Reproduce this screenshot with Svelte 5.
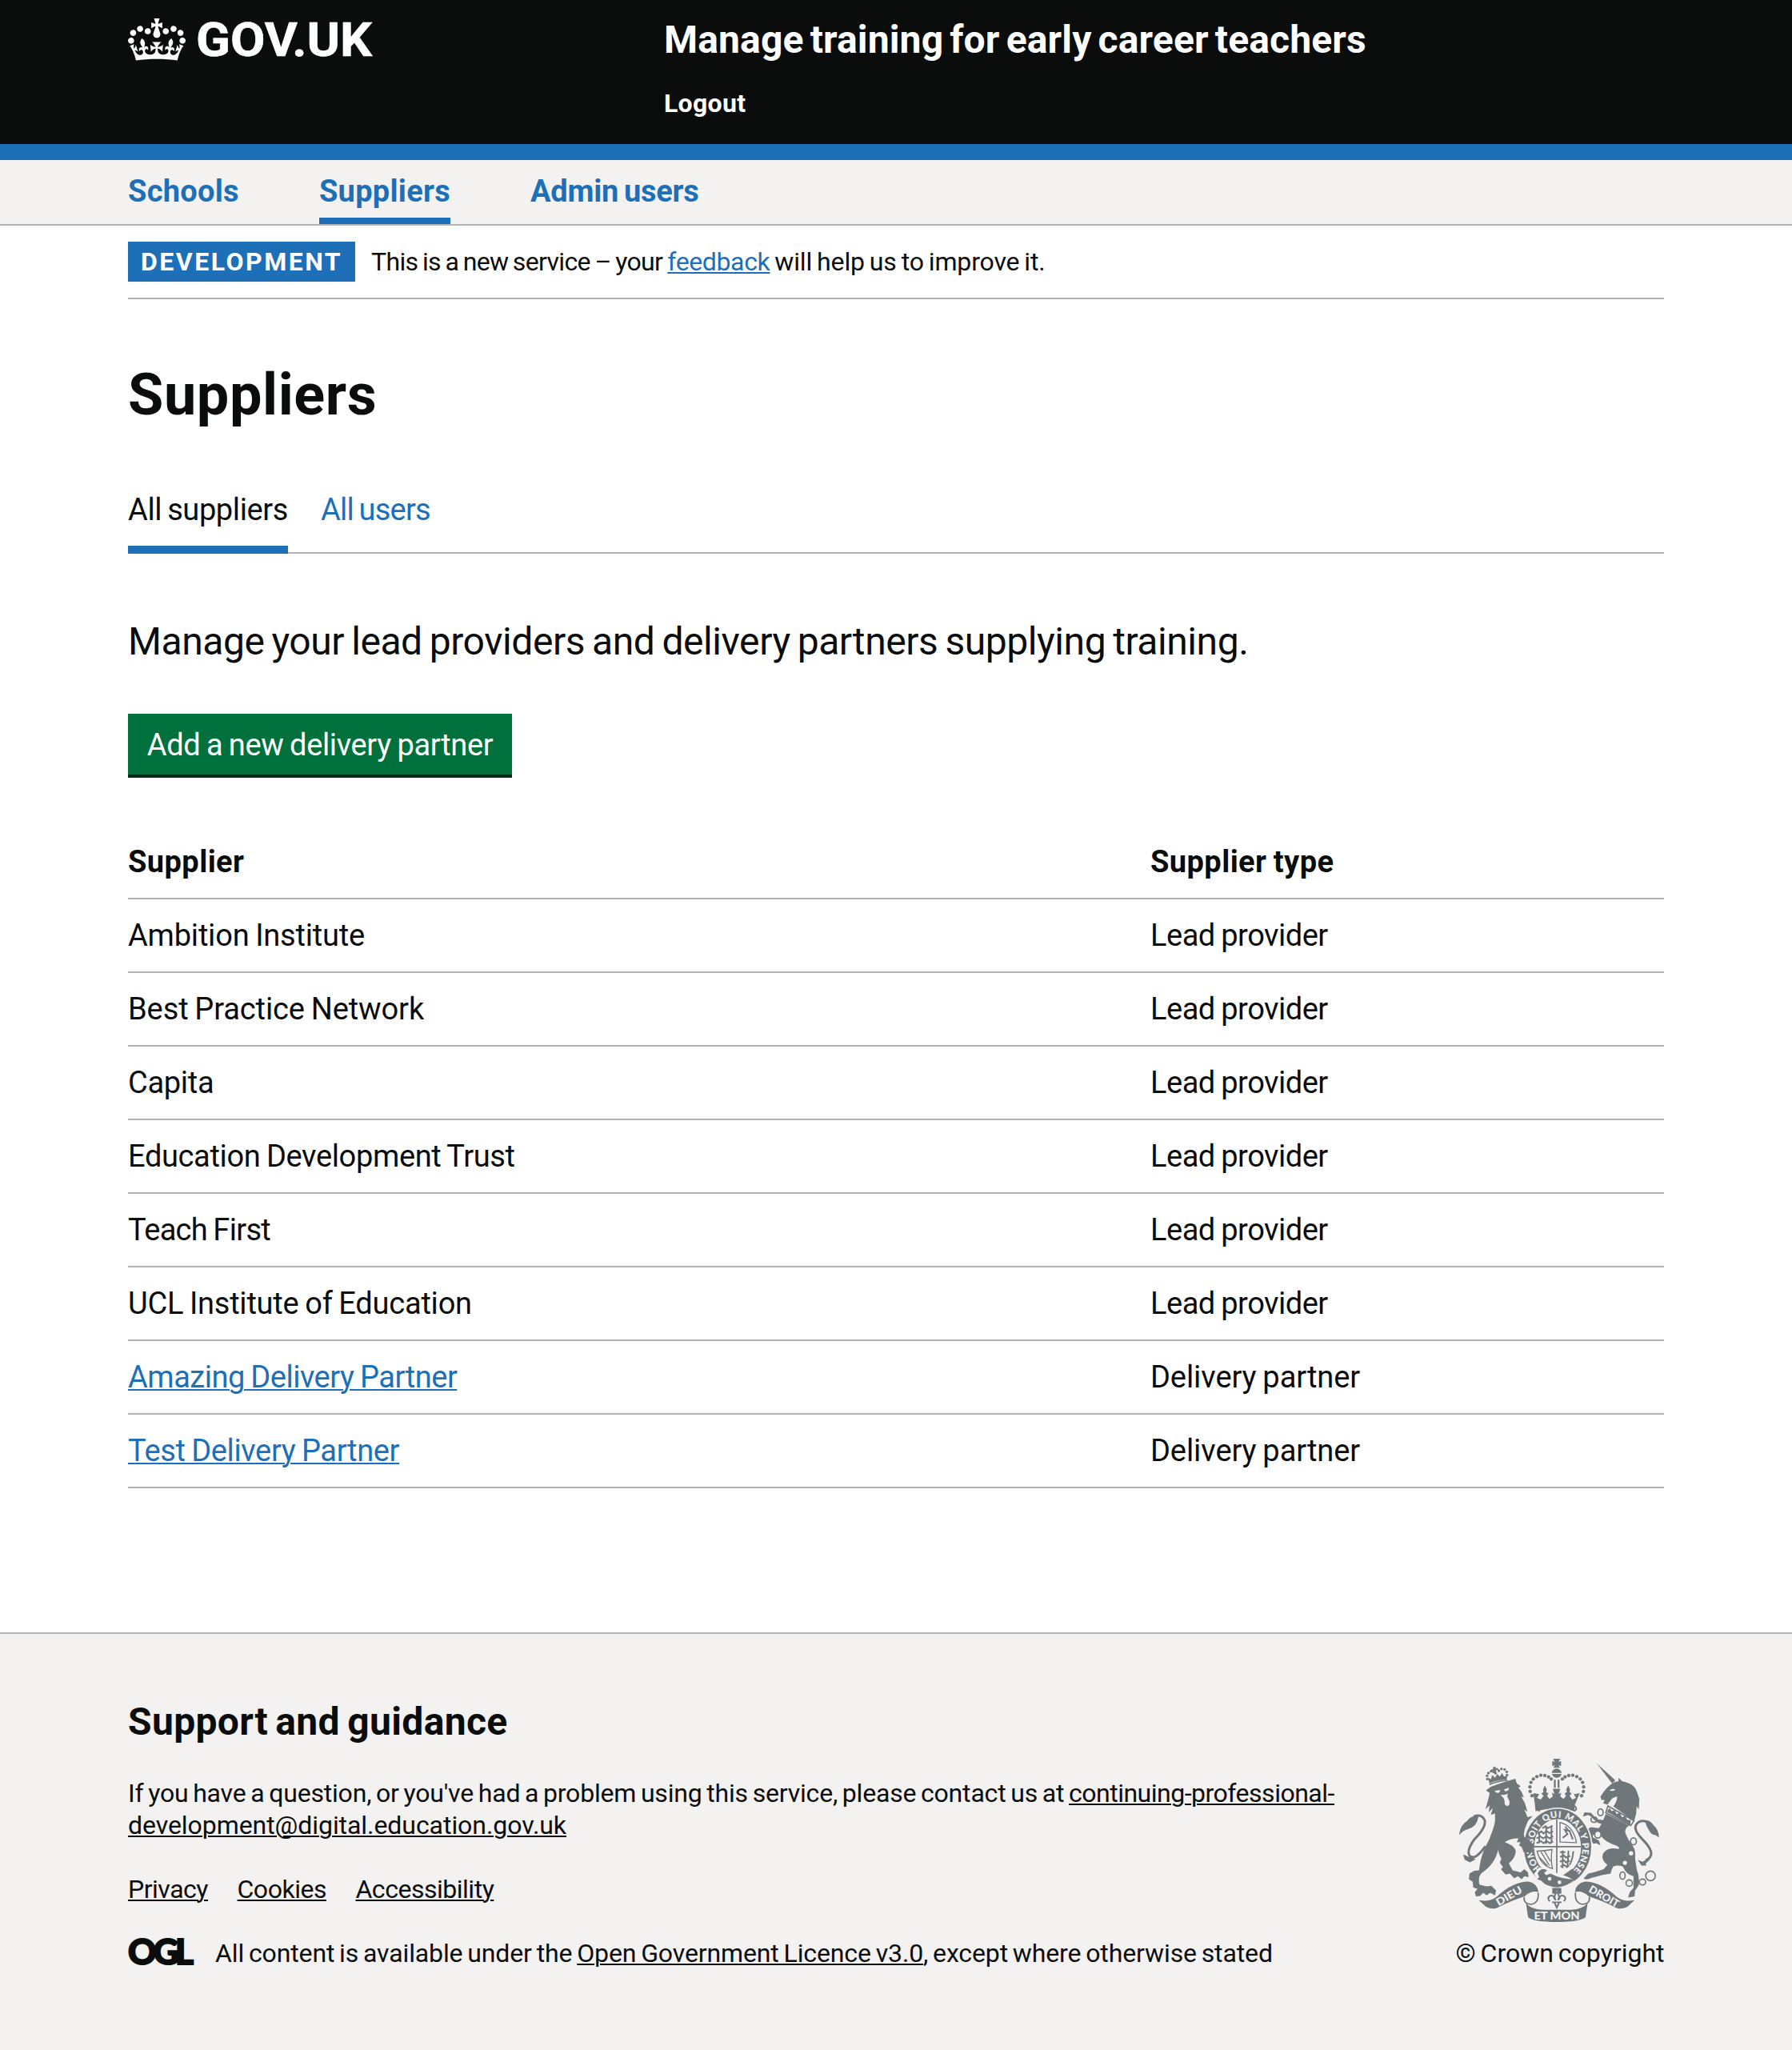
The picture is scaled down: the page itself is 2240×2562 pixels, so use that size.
<script>
  const rows = [
    { name: 'Ambition Institute', type: 'Lead provider', tracking: -0.2 },
    { name: 'Best Practice Network', type: 'Lead provider', tracking: -0.1 },
    { name: 'Capita', type: 'Lead provider', tracking: -0.3 },
    { name: 'Education Development Trust', type: 'Lead provider', tracking: -0.35 },
    { name: 'Teach First', type: 'Lead provider', tracking: -0.68 },
    { name: 'UCL Institute of Education', type: 'Lead provider', tracking: -0.22 },
    { name: 'Amazing Delivery Partner', type: 'Delivery partner', tracking: -0.48, link: true },
    { name: 'Test Delivery Partner', type: 'Delivery partner', tracking: -0.36, link: true }
  ];

  const lionCrownDots = [[111, 81], [110, 69], [115, 59], [125, 52], [135, 55], [185, 66], [184, 54], [176, 45], [164, 43], [154, 50]];

  const crownDots = [
    [345, 192], [338, 176], [337, 159], [341, 142], [350, 129], [363, 120], [378, 115], [393, 116], [407, 121], [417, 129],
    [531, 192], [538, 176], [539, 159], [535, 142], [526, 129], [513, 120], [498, 115], [483, 116], [469, 121], [459, 129]
  ];
</script>

<header class="header">
  <div class="width header-row">
    <a class="brand" href="#home">
      <svg class="crown" viewBox="0 0 132 97" aria-hidden="true"><path fill="currentColor" fill-rule="evenodd" d="M25 30.2c3.5 1.5 7.7-.2 9.1-3.7 1.5-3.6-.2-7.8-3.9-9.2-3.6-1.4-7.6.3-9.1 3.9-1.4 3.5.3 7.5 3.9 9zM9 39.5c3.6 1.5 7.8-.2 9.2-3.7 1.5-3.6-.2-7.8-3.9-9.1-3.6-1.5-7.6.2-9.1 3.8-1.4 3.5.3 7.5 3.8 9zM4.4 57.2c3.5 1.5 7.7-.2 9.1-3.8 1.5-3.6-.2-7.7-3.9-9.1-3.5-1.5-7.6.3-9.1 3.8-1.4 3.5.3 7.6 3.9 9.1zm38.3-21.4c3.5 1.5 7.7-.2 9.1-3.8 1.5-3.6-.2-7.7-3.9-9.1-3.6-1.5-7.6.3-9.1 3.8-1.3 3.6.4 7.7 3.9 9.1zm64.4-5.6c-3.6 1.5-7.8-.2-9.1-3.7-1.5-3.6.2-7.8 3.8-9.2 3.6-1.4 7.7.3 9.2 3.9 1.3 3.5-.4 7.5-3.9 9zm15.9 9.3c-3.6 1.5-7.7-.2-9.1-3.7-1.5-3.6.2-7.8 3.7-9.1 3.6-1.5 7.7.2 9.2 3.8 1.5 3.5-.3 7.5-3.8 9zm4.7 17.7c-3.6 1.5-7.8-.2-9.2-3.8-1.5-3.6.2-7.7 3.9-9.1 3.6-1.5 7.7.3 9.2 3.8 1.3 3.5-.4 7.6-3.9 9.1zM89.3 35.8c-3.6 1.5-7.8-.2-9.2-3.8-1.4-3.6.2-7.7 3.9-9.1 3.6-1.5 7.7.3 9.2 3.8 1.4 3.6-.3 7.7-3.9 9.1zM69.7 17.7l8.9 4.7V9.3l-8.9 2.8c-.2-.3-.5-.6-.9-.9L72.4 0H59.6l3.5 11.2c-.3.3-.6.5-.9.9l-8.8-2.8v13.1l8.8-4.7c.3.3.6.7.9.9l-5 15.4v.1c-.2.8-.4 1.6-.4 2.4 0 4.1 3.1 7.5 7 8.1h.2c.3 0 .7.1 1 .1.4 0 .7 0 1-.1h.2c4-.6 7.1-4.1 7.1-8.1 0-.8-.1-1.7-.4-2.4V34l-5.1-15.4c.4-.2.7-.6 1-.9zM66 92.8c16.9 0 32.8 1.1 47.1 3.2 4-16.9 8.9-26.7 14-33.5l-9.6-3.4c1 4.9 1.1 7.2 0 10.2-1.5-1.4-3-4.3-4.2-8.7L108.6 76c2.8-2 5-3.2 7.5-3.3-4.4 9.4-10 11.9-13.6 11.2-4.3-.8-6.3-4.6-5.6-7.9 1-4.7 5.7-5.9 8-.5 4.3-8.7-3-11.4-7.6-8.8 7.1-7.2 7.9-13.5 2.1-21.1-8 6.1-8.1 12.3-4.5 20.8-4.7-5.4-12.1-2.5-9.5 6.2 3.4-5.2 7.9-2 7.2 3.1-.6 4.3-6.4 7.8-13.5 7.2-10.3-.9-10.9-8-11.2-13.8 2.5-.5 7.1 1.8 11 7.3L80.2 60c-4.1 4.4-8 5.3-12.3 5.4 1.4-4.4 8-11.6 8-11.6H55.5s6.4 7.2 7.9 11.6c-4.2-.1-8-1-12.3-5.4l1.4 16.4c3.9-5.5 8.5-7.7 10.9-7.3-.3 5.8-.9 12.8-11.1 13.8-7.2.6-12.9-2.9-13.5-7.2-.7-5 3.8-8.3 7.1-3.1 2.7-8.7-4.6-11.6-9.4-6.2 3.7-8.5 3.6-14.7-4.6-20.8-5.8 7.6-5 13.9 2.2 21.1-4.7-2.6-11.9.1-7.7 8.8 2.3-5.5 7.1-4.2 8.1.5.7 3.3-1.3 7.1-5.7 7.9-3.5.7-9-1.8-13.5-11.2 2.5.1 4.7 1.3 7.5 3.3l-4.7-15.4c-1.2 4.4-2.7 7.2-4.3 8.7-1.1-3-.9-5.3 0-10.2l-9.5 3.4c5 6.9 9.9 16.7 14 33.5 14.8-2.1 30.8-3.2 47.7-3.2z" /></svg>
      <svg class="wordmark" viewBox="0 0 222 60"><text x="0" y="47" textLength="220" lengthAdjust="spacingAndGlyphs">GOV.UK</text></svg>
    </a>
    <div class="service">
      <a class="service-name" href="#service">Manage training for early career teachers</a>
      <a class="logout" href="#logout">Logout</a>
    </div>
  </div>
</header>

<nav class="primary">
  <div class="width primary-row">
    <a href="#schools">Schools</a>
    <a class="current" href="#suppliers">Suppliers</a>
    <a class="admin" href="#admin">Admin users</a>
  </div>
</nav>

<main class="width">
  <div class="phase">
    <strong class="tag">Development</strong>
    <span class="message"><span class="intro">This is a new service – your</span> <a href="#feedback">feedback</a> will help us to improve it.</span>
  </div>

  <h1>Suppliers</h1>

  <div class="tabs">
    <a class="active" href="#all">All suppliers</a>
    <a class="users" href="#users">All users</a>
  </div>

  <p class="lead">Manage your lead providers and delivery partners supplying training.</p>
  <button type="button">Add a new delivery partner</button>

  <table>
    <thead>
      <tr><th>Supplier</th><th>Supplier type</th></tr>
    </thead>
    <tbody>
      {#each rows as row}
        <tr>
          <td style:letter-spacing="{row.tracking}px">
            {#if row.link}<a href="#supplier">{row.name}</a>{:else}{row.name}{/if}
          </td>
          <td class:delivery={row.link} class:provider={!row.link}>{row.type}</td>
        </tr>
      {/each}
    </tbody>
  </table>
</main>

<footer>
  <div class="width footer-row">
    <div class="support">
      <h2>Support and guidance</h2>
      <p class="contact">If you have a question, or you've had a problem using this service, please contact us at <a href="#mail">continuing-professional-<br /><span class="domain">development@digital.education.gov.uk</span></a></p>
      <div class="links"><a href="#privacy">Privacy</a><a href="#cookies">Cookies</a><a href="#accessibility">Accessibility</a></div>
      <div class="licence">
        <svg class="ogl" viewBox="0 0 82 34" role="img" aria-label="OGL"><text x="0" y="33" textLength="82" lengthAdjust="spacing">OGL</text></svg>
        <span>All content is available under the <a href="#ogl">Open Government Licence v3.0</a><span class="tail-text">, except where otherwise stated</span></span>
      </div>
    </div>

    <div class="crown-copy">
      <svg class="crest" viewBox="72 53 750 613" aria-hidden="true">
        <!-- lion -->
        <g transform="translate(66 48)">
          {#each lionCrownDots as [cx, cy]}<circle {cx} {cy} r="5" />{/each}
          <path d="M118 92 113 76l12 6 4-16 11 10 8-14 10 10 8-14 8 14 12-4-2 16q-34 0-66 14zM131 37l12-3-1 8 8-3 2 9-9 0 4 14-9 2-2-14-8 4-2-9 8-1z" />
          <path class="line fold" d="M119 102q30-14 68-16" />
          <path d="M106 124 124 110Q170 92 216 80L222 98 236 108 228 114 240 130 248 150 238 146 252 172 262 204 250 196 262 224 282 220 264 238 252 268 248 290 268 318 284 340 286 370 278 356 268 364 262 352 248 360 240 336 230 330 236 318 222 318 228 304Q200 302 176 318 214 330 218 352 216 378 192 398L206 424 236 432 250 420 264 432 266 450 250 446 240 458 226 446 212 454 196 436 180 440 162 420 170 412 158 396 164 380Q152 360 152 346 140 400 90 434 74 450 82 478L108 484 126 482 144 500 140 518 122 508 108 518 96 508 84 520 68 522 64 506 74 494 58 488 56 466 42 458 44 436 62 426 80 424Q84 380 102 340 130 290 140 240L140 210 124 216 132 190 116 206 120 180 104 194 114 160 120 134Z" />
          <path class="paper" d="M138 126l22-4-4 10q-12 4-18-6zM174 120l18-6-2 10-12 4zM160 140q16 4 28-4l-2 12 8 16q2 18-8 18-12 0-10-18l-4-12z" />
          <path class="line tail" d="M104 334Q62 392 44 368 32 350 62 308 108 262 101 236 90 210 60 222" />
          <path d="M6 292q0-34 30-54 14-22 42-16-6 40-42 48-20 6-30 22zM20 364l22 10 14-4 4 10 8 2-22 12-20-10z" />
        </g>
        <!-- unicorn -->
        <g transform="translate(66 48)">
          <path d="M522 22 592 86 580 98ZM590 92 604 90 604 76 618 90Q656 96 668 118L674 132 682 156 680 196 672 184 670 212 662 240 584 184Q600 164 598 146L580 154 562 178 546 172 552 160 540 160 536 148Q558 108 590 92Z" />
          <path class="paper" d="M570 124q8-8 22-4-8 10-22 4z" />
          <path class="line fold" d="M564 182 662 238 650 256 556 208Z" />
          <path d="M560 204 570 190 578 202 590 198 596 212 610 208 616 224 630 220 636 234 650 236 648 254Z" />
          <path d="M556 212 644 256Q622 268 632 290 640 310 652 326 670 344 666 378L672 420Q684 450 680 480L666 500 664 522 640 526 646 506 660 490 660 446Q632 440 620 410 600 402 584 410 578 420 574 436L540 442 504 452 486 458 472 456 490 436 516 430 548 420 562 404Q534 380 548 358 566 336 604 344 612 336 586 328 556 318 538 296L520 290Q504 286 508 300L530 312 536 330 520 322 510 324 490 300 484 272 500 262 530 266 540 250Q520 246 504 224L490 216 470 222 476 206 500 208 522 232 546 236Z" />
          <path class="line tail" d="M706 386Q736 374 722 344 714 328 694 308 656 270 672 250 686 232 712 242" />
          <path d="M756 302Q744 290 732 290 714 276 702 238 720 230 736 256 754 268 756 302ZM676 384 694 392 714 380 720 386 706 398 708 406 690 406Z" />
        </g>
        <g class="line chain">
          <ellipse cx="602" cy="254" rx="10" ry="13" /><ellipse cx="578" cy="282" rx="12" ry="10" /><ellipse class="paper" cx="592" cy="338" rx="12" ry="13" />
          <ellipse class="paper" cx="726" cy="363" rx="11" ry="13" /><ellipse cx="685" cy="492" rx="10" ry="14" /><ellipse cx="710" cy="520" rx="12" ry="12" />
          <ellipse cx="760" cy="516" rx="12" ry="11" /><circle cx="790" cy="493" r="18" />
        </g>
        <g class="paper"><circle cx="717" cy="408" r="8" /><circle cx="694" cy="444" r="8" /></g>
        <!-- royal crown -->
        <path d="M424 53h27l-7 12 10-4v20l-10-4 6 10h-25l6-10-10 4V61l10 4zM419 106q2-14 18-16 17 2 19 16zM420 110h36q-2 12-18 15-16-3-18-15zM427 132h7v30h-7zM441 132h7v30h-7z" />
        {#each crownDots as [cx, cy]}<circle {cx} {cy} r="6.5" />{/each}
        <path d="M350 182l22 4-8 14 14 6 10-14-8-8 8-6-2-10 7-14 8 14-3 10 9 6-6 8 10 12 12-10-4-14 10 6-6-20h28l-6 20 10-6-4 14 12 10 10-12-6-8 9-6-3-10 8-14 7 14-2 10 8 6-8 8 10 14 14-6-8-14 22-4-18 44-2 24q-73-18-146 0l-2-24z" />
        <path class="line hem" d="M374 250q-16-6-5-18 69-15 138 0 11 12-5 18" />
        <!-- garter -->
        <ellipse class="halo" cx="441" cy="386" rx="107" ry="126" />
        <ellipse class="line garter" cx="441" cy="386" rx="107" ry="126" />
        <path id="motto-path" class="line" stroke-width="0" d="M381.8 471.8A93 112 0 1 1 489 482" />
        <text class="motto" textLength="512" lengthAdjust="spacing"><textPath href="#motto-path">HONI SOIT QUI MAL Y PENSE</textPath></text>
        <path d="M306 340l24 14 16 20 6 44-8-14-8 8-8-12-14 6-8-30z" />
        <!-- quartered shield -->
        <path class="line shield" d="M438 280v206M352 383h176" />
        <path class="line lions" d="M366 334l14-8 8 8 12-10 10 8 14-6M362 352l14-8 10 8 14-8 10 8 14-8M362 370l16-8 10 8 12-8 12 8 12-6M384 314l12-8 8 8 18-10M372 326v44M398 306v66M418 304v66M450 404h20M450 422l14-6 8 8 16-6M450 440l14-6 8 8 14-6M452 458l14-6 10 8 8-6M460 398v66M482 398l-4 62M500 400q-2 30-14 52" />
        <path class="line field" d="M450 292q50 12 62 76l-62-2z" />
        <path class="line lions" d="M460 350l18-14-10-16 18 4 12 32M470 308l12 16" />
        <path class="line field" d="M364 400q30-2 56-6-6 40 2 72-46-12-58-66zM378 402l32 52M392 400l22 38M370 420l32 34" />
        <!-- buckle and strap -->
        <path class="paper" d="M352 486l20-26 40 16 52 12 40 22-48 34h-60z" />
        <path d="M366 484q8-20 26-16l10 4-12 10 8 8 16-6q42 22 92 22-32 28-66 30-40 0-62-26l-14-4 8-8z" />
        <path d="M462 490l34-24 10 12-22 20z" />
        <g class="paper"><circle cx="411" cy="504" r="7" /><circle cx="448" cy="517" r="7" /></g>
        <!-- fleur-de-lis pendant -->
        <path d="M421 538h34v22h-8l-9-12-9 12h-8z" />
        <path class="line fleur" d="M438 552q-14 18-4 32M438 552q14 18 4 32M430 582q-4-20-18-14-12 10 0 20M446 582q4-20 18-14 12 10 0 20M420 592h36M430 594l8 18 8-18" />
        <!-- ribbon -->
        <path d="M145 584q40 8 66-12 62-58 120-58 34 6 38 40-26-8-52 16-50 16-106 44-20 6-40-6z" />
        <path d="M730 584q-40 8-66-12-62-58-120-58-34 6-38 40 26-8 52 16 50 16 106 44 20 6 40-6z" />
        <path class="line fold" d="M316 572q-6 24 26 28 30-6 26-44M560 572q6 24-26 28-30-6-26-44" />
        <path d="M322 594q20 26 60 26h112q40 0 60-26l-8 54q-20 18-108 18t-108-18z" />
        <text class="ribbon" x="438" y="656" textLength="172" lengthAdjust="spacingAndGlyphs">ET MON</text>
        <text class="ribbon" transform="translate(265 580) rotate(-30)" textLength="106" lengthAdjust="spacingAndGlyphs">DIEU</text>
        <text class="ribbon" transform="translate(609 582) rotate(30)" textLength="124" lengthAdjust="spacingAndGlyphs">DROIT</text>
      </svg>
      <span>© Crown copyright</span>
    </div>
  </div>
</footer>

<style>
  :global(body) { background: #fff; }
  :global(#app) { font-family: Roboto, "Liberation Sans", sans-serif; color: #0b0c0c; }
  a { color: #1d70b8; text-decoration-thickness: 2px; text-underline-offset: 2px; }
  h1, h2, p { margin: 0; }
  .width { width: 1920px; margin: 0 auto; }

  .header { background: #0b0c0c; height: 180px; border-bottom: 20px solid #1d70b8; }
  .header-row { display: grid; grid-template-columns: 670px 1fr; }
  .header a { color: #fff; text-decoration: none; font-weight: 700; }
  .brand { display: flex; align-items: flex-start; padding-top: 23px; }
  .crown { width: 72px; height: 53px; }
  .wordmark { width: 222px; height: 60px; margin-left: 13px; overflow: visible; }
  .wordmark text { font: 700 59px Roboto, sans-serif; fill: #fff; stroke: #fff; stroke-width: 0.6px; }
  .service { display: flex; flex-direction: column; align-items: flex-start; padding-top: 20px; gap: 29px; }
  .service-name { font-size: 48px; line-height: 60px; letter-spacing: 0.15px; word-spacing: -4px; }
  .logout { font-size: 32px; line-height: 40px; letter-spacing: 0.3px; }

  .primary { height: 80px; background: #f3f2f1; border-bottom: 2px solid #b1b4b6; }
  .primary-row { display: flex; gap: 100px; }
  .primary a { height: 66px; padding-top: 14px; font-size: 38px; line-height: 50px; font-weight: 700; text-decoration: none; letter-spacing: 0.28px; }
  .primary .current { box-shadow: inset 0 -8px #1d70b8; }
  .primary .admin { letter-spacing: -0.2px; word-spacing: -2.5px; }

  .phase { display: flex; gap: 20px; padding: 20px 0; border-bottom: 2px solid #b1b4b6; font-size: 32px; line-height: 50px; }
  .tag { box-sizing: border-box; width: 284px; padding-left: 16px; background: #1d70b8; color: #fff; text-transform: uppercase; letter-spacing: 2.5px; }
  .message { letter-spacing: -0.15px; word-spacing: -1.8px; }
  .intro { letter-spacing: -0.65px; }
  .message a { letter-spacing: -0.38px; }
  h1 { margin-top: 80px; font-size: 72px; line-height: 80px; letter-spacing: 0.6px; }

  .tabs { display: flex; gap: 41px; margin-top: 78px; box-shadow: inset 0 -2px #b1b4b6; font-size: 38px; line-height: 50px; word-spacing: -2px; }
  .tabs a { padding-bottom: 30px; text-decoration: none; letter-spacing: -0.39px; }
  .tabs .active { color: #0b0c0c; box-shadow: inset 0 -10px #1d70b8; }
  .tabs .users { letter-spacing: -0.77px; }

  .lead { margin-top: 80px; font-size: 48px; line-height: 60px; letter-spacing: -0.43px; word-spacing: -2.5px; }
  button { display: block; margin: 60px 0 64px; width: 480px; height: 76px; padding: 14px 0 12px; border: 0; background: #00703c; box-shadow: 0 4px #002d18; color: #fff; font: 400 38px/50px Roboto, sans-serif; letter-spacing: -0.35px; word-spacing: -1.5px; }

  table { width: 100%; border-collapse: separate; border-spacing: 0; table-layout: fixed; font-size: 38px; line-height: 50px; word-spacing: -1.5px; }
  th, td { padding: 20px 0; border-bottom: 2px solid #b1b4b6; text-align: left; }
  th { letter-spacing: 0.43px; }
  th:first-child { width: 1278px; }
  .provider { letter-spacing: -0.48px; }
  .delivery { letter-spacing: -0.07px; }

  footer { margin-top: 180px; min-height: 520px; background: #f3f2f1; border-top: 2px solid #b1b4b6; font-size: 32px; line-height: 40px; }
  footer a { color: #0b0c0c; }
  .footer-row { display: flex; justify-content: space-between; align-items: flex-end; }
  h2 { padding-top: 80px; font-size: 48px; line-height: 60px; letter-spacing: 0.35px; word-spacing: -3px; }
  .contact { margin-top: 39px; white-space: nowrap; letter-spacing: -0.19px; word-spacing: -2px; }
  .contact a { letter-spacing: -0.49px; }
  .contact .domain { letter-spacing: -0.06px; }
  .links { display: flex; gap: 36.5px; margin-top: 40px; letter-spacing: -0.48px; }
  .licence { display: flex; align-items: flex-start; margin-top: 40px; letter-spacing: -0.12px; word-spacing: -2px; }
  .ogl { width: 82px; height: 34px; margin: 1px 27px 0 0; overflow: visible; }
  .ogl text { font: 900 44px Lato, sans-serif; letter-spacing: 0; fill: #0b0c0c; stroke: #0b0c0c; stroke-width: 2px; }

  .crown-copy { display: flex; flex-direction: column; align-items: center; width: 260px; white-space: nowrap; word-spacing: -2px; }
  .crest { width: 250px; height: 204px; margin: 0 2px 19px 0; fill: #6f777b; word-spacing: 0; }
  .paper { fill: #f3f2f1; }
  .line { fill: none; stroke: #6f777b; }
  .halo { fill: none; stroke: #f3f2f1; stroke-width: 48px; }
  .tail { stroke-width: 9px; }
  .chain { stroke-width: 5px; }
  .garter { stroke-width: 38px; }
  .shield { stroke-width: 5px; }
  .field { stroke-width: 4px; }
  .lions { stroke-width: 6px; }
  .hem { stroke-width: 6px; }
  .fleur { stroke-width: 6px; }
  .fold { stroke-width: 5px; }
  .motto { font: 700 33px Lato, sans-serif; fill: #f3f2f1; stroke: #f3f2f1; stroke-width: 0.8px; }
  .ribbon { font: 900 39px Lato, sans-serif; fill: #f3f2f1; text-anchor: middle; }
</style>
